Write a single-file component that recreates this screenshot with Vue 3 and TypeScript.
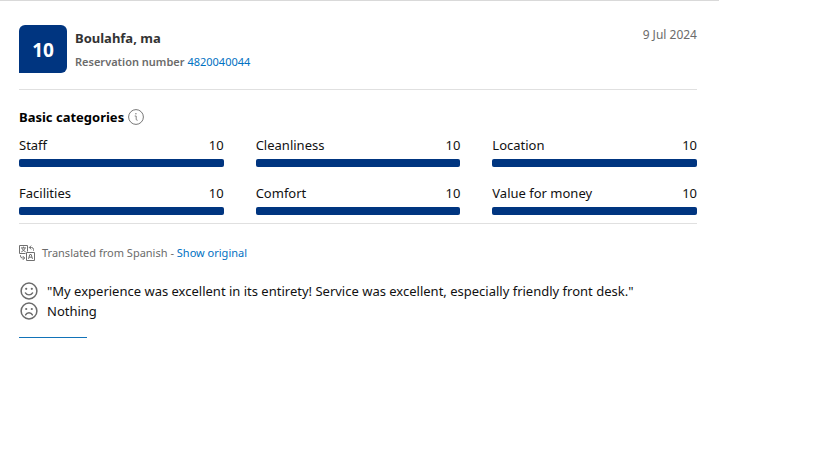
<script setup lang="ts">
interface Category {
  name: string
  score: number
}

const review = {
  score: 10,
  guest: 'Boulahfa, ma',
  reservation: '4820040044',
  date: '9 Jul 2024',
  liked: '"My experience was excellent in its entirety! Service was excellent, especially friendly front desk."',
  disliked: 'Nothing',
}

const categories: Category[] = [
  { name: 'Staff', score: 10 },
  { name: 'Cleanliness', score: 10 },
  { name: 'Location', score: 10 },
  { name: 'Facilities', score: 10 },
  { name: 'Comfort', score: 10 },
  { name: 'Value for money', score: 10 },
]
</script>

<template>
  <article class="review">
    <header class="head">
      <div class="badge">{{ review.score }}</div>
      <div class="who">
        <h2 class="guest">{{ review.guest }}</h2>
        <p class="reservation"><span class="res-label">Reservation number</span> <a href="#reservation">{{ review.reservation }}</a></p>
      </div>
      <time class="date" datetime="2024-07-09">{{ review.date }}</time>
    </header>

    <section class="scores">
      <h3 class="title">
        Basic categories
        <button class="info" type="button" aria-label="About the categories">
          <svg viewBox="0 0 16 16" width="16" height="16" fill="none" stroke="#777">
            <circle cx="8" cy="8" r="7.4" stroke-width="1" />
            <path d="M6.7 7h1.5v3.2q0 1.2 1.4 1.1" stroke-width="0.9" />
            <circle cx="7.9" cy="4.7" r="0.7" fill="#777" stroke="none" />
          </svg>
        </button>
      </h3>
      <ul class="grid">
        <li v-for="category in categories" :key="category.name" class="category">
          <div class="row">
            <span>{{ category.name }}</span>
            <span>{{ category.score }}</span>
          </div>
          <div class="track">
            <div class="fill" :style="{ width: category.score * 10 + '%' }"></div>
          </div>
        </li>
      </ul>
    </section>

    <p class="translated">
      <svg class="translate-icon" viewBox="0 0 16 16" width="16" height="16" fill="none" stroke="#707070" stroke-width="1">
        <path d="M8.5 6.5v-6h-8v8h6" />
        <path d="M2 2.9h5M4.5 1.6v1.3M3 3.2q.8 2.6 3.7 3.7M6 3.2q-.8 2.6-3.7 3.7" />
        <path d="M7.5 7.5h8v8h-8z" />
        <path d="M9.5 13.9l1.3-4.4h1.4l1.3 4.4M10 12.2h3" />
        <path d="M10.3 2.5h2.2q2 0 2 2v1.2M12.2.6l-1.9 1.9 1.9 1.9" />
        <path d="M1.5 10.2v.8q0 2 2 2h2M3.8 11.1L5.7 13l-1.9 1.9" />
      </svg>
      <span>Translated from Spanish - <a href="#original">Show original</a></span>
    </p>

    <div class="comments">
      <p class="comment">
        <svg class="face" viewBox="0 0 18 18" width="18" height="18" fill="none" stroke="#6b6b6b" stroke-width="1.5" stroke-linecap="round">
          <circle cx="9" cy="9" r="7.9" />
          <path d="M5.4 10.9q1.2 2 3.6 2t3.6-2" stroke-width="1.4" />
          <circle cx="6.2" cy="6.8" r="1.1" fill="#6b6b6b" stroke="none" />
          <circle cx="11.8" cy="6.8" r="1.1" fill="#6b6b6b" stroke="none" />
        </svg>
        <span>{{ review.liked }}</span>
      </p>
      <p class="comment">
        <svg class="face" viewBox="0 0 18 18" width="18" height="18" fill="none" stroke="#6b6b6b" stroke-width="1.5" stroke-linecap="round">
          <circle cx="9" cy="9" r="7.9" />
          <path d="M5.6 12.9q1-2.1 3.4-2.1t3.4 2.1" stroke-width="1.4" />
          <circle cx="6.2" cy="7" r="1.1" fill="#6b6b6b" stroke="none" />
          <circle cx="11.8" cy="7" r="1.1" fill="#6b6b6b" stroke="none" />
        </svg>
        <span>{{ review.disliked }}</span>
      </p>
    </div>
    <div class="action-edge"></div>
  </article>
</template>

<style>
body {
  background: #fff;
}
</style>

<style scoped>
.review {
  margin-right: 100px;
  padding: 24px 22px 0 19px;
  border-top: 1px solid #d9d9d9;
  font-family: "Segoe UI", "Noto Sans", "Open Sans", sans-serif;
  font-size: 13px;
  line-height: 20px;
  color: #111;
}

h2,
h3,
p,
ul {
  margin: 0;
  padding: 0;
}

a {
  color: #0071c2;
  text-decoration: none;
}

.head {
  display: flex;
  gap: 8px;
  padding-bottom: 16px;
  border-bottom: 1px solid #e0e0e0;
}

.badge {
  width: 48px;
  height: 48px;
  border-radius: 6px 6px 6px 0;
  background: #003580;
  color: #fff;
  font-size: 19px;
  font-weight: 700;
  line-height: 50px;
  text-align: center;
}

.who {
  flex: 1;
  padding-top: 3px;
}

.guest {
  font-size: 13px;
  font-weight: 700;
  line-height: 20px;
  color: #333;
}

.reservation {
  padding-top: 4px;
  font-size: 11px;
  line-height: 20px;
  color: #6b6b6b;
}

.res-label {
  font-weight: 600;
}

.date {
  font-size: 12px;
  line-height: 20px;
  color: #6b6b6b;
}

.scores {
  padding: 17px 0 8px;
  border-bottom: 1px solid #e0e0e0;
}

.title {
  display: flex;
  align-items: center;
  gap: 4px;
  font-size: 13px;
  font-weight: 700;
  color: #000;
}

.info {
  display: flex;
  padding: 0;
  border: 0;
  background: none;
}

.grid {
  display: grid;
  grid-template-columns: repeat(3, 1fr);
  gap: 16px 32px;
  padding-top: 8px;
  list-style: none;
}

.row {
  display: flex;
  justify-content: space-between;
}

.track {
  height: 8px;
  margin-top: 4px;
  border-radius: 2px;
  background: #e6e6e6;
}

.fill {
  height: 100%;
  border-radius: 2px;
  background: #003580;
}

.translated {
  display: flex;
  align-items: center;
  gap: 7px;
  padding-top: 19px;
  font-size: 11px;
  color: #6b6b6b;
}

.comments {
  padding-top: 18px;
}

.comment {
  display: flex;
  align-items: center;
  gap: 9px;
  padding-left: 1px;
}

.face,
.translate-icon {
  flex: none;
}

.action-edge {
  width: 68px;
  height: 1px;
  margin-top: 16px;
  background: #1273b8;
}
</style>
